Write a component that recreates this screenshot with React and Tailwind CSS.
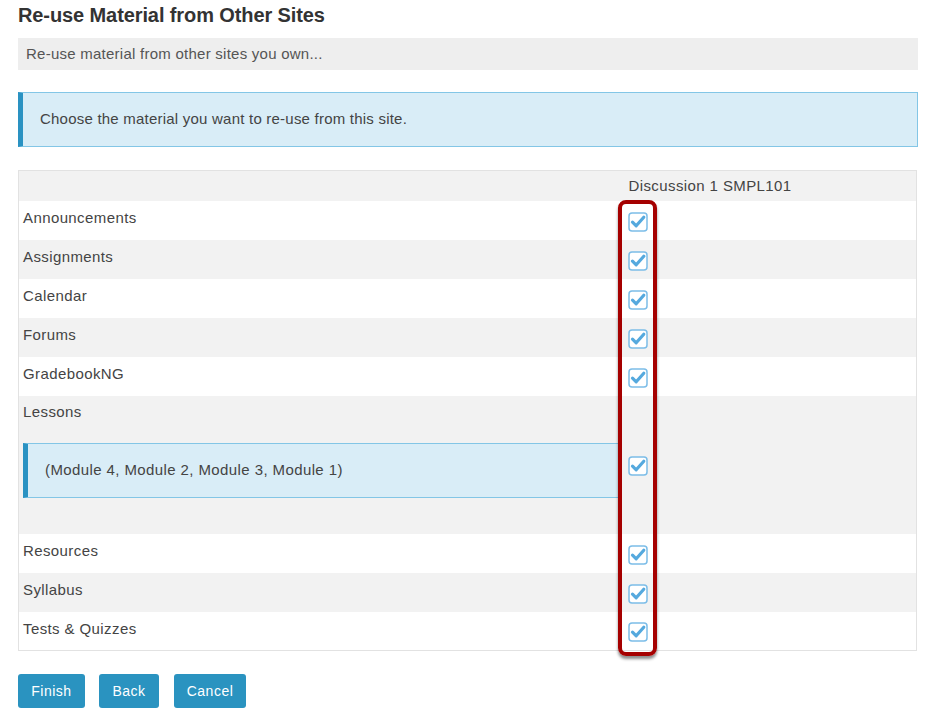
import React from 'react';

const Check = () => (
    <svg width="20" height="20" viewBox="0 0 20 20" className="block">
        <rect x="1" y="1" width="18" height="18" rx="3" fill="#ffffff" stroke="#7cbde8" strokeWidth="1.5" />
        <path d="M4.5 10.2 L8.2 13.8 L15.8 5.2" fill="none" stroke="#55a9de" strokeWidth="3.2" strokeLinecap="round" strokeLinejoin="round" />
    </svg>
);

const rows = [
    'Announcements',
    'Assignments',
    'Calendar',
    'Forums',
    'GradebookNG',
    'Lessons',
    'Resources',
    'Syllabus',
    'Tests & Quizzes',
];

export default function App() {
    return (
        <div className="bg-white min-h-[720px] px-[18px] pt-[3px] text-[#444]" style={{ fontFamily: '"Liberation Sans", Arial, sans-serif' }}>
            <div className="w-[900px]">
                <h1 className="text-[20px] font-bold text-[#333] leading-[24px] tracking-[-0.1px]">Re-use Material from Other Sites</h1>

                <div className="mt-[11px] bg-[#eeeeee] h-[32px] flex items-center px-[8px] text-[15px] tracking-[0.25px] text-[#555]">
                    Re-use material from other sites you own...
                </div>

                <div className="mt-[22px] bg-[#d9edf7] border border-[#83c6e6] border-l-[5px] border-l-[#2a92c2] h-[55px] flex items-center pl-[17px] text-[15px] tracking-[0.22px] text-[#444]">
                    Choose the material you want to re-use from this site.
                </div>

                <div className="relative mt-[23px]">
                    <table className="w-[899px] border border-[#e2e2e2] text-[15px] tracking-[0.4px] text-[#444]">
                        <thead>
                            <tr className="bg-[#f2f2f2] h-[30px]">
                                <th className="w-[605px]"></th>
                                <th className="text-left font-normal pl-[5px] align-middle">Discussion 1 SMPL101</th>
                            </tr>
                        </thead>
                        <tbody>
                            {rows.map((name, i) => {
                                const bg = i % 2 === 0 ? 'bg-white' : 'bg-[#f2f2f2]';
                                if (name === 'Lessons') {
                                    return (
                                        <tr key={name} className={`${bg} h-[138px]`}>
                                            <td className="align-top pl-[4px] pt-[6px] pb-[36px]">
                                                <div className="leading-[20px]">Lessons</div>
                                                <div className="mt-[21px] h-[55px] bg-[#d9edf7] border border-[#83c6e6] border-l-[5px] border-l-[#2a92c2] flex items-center pl-[17px] mr-[4px]">
                                                    (Module 4, Module 2, Module 3, Module 1)
                                                </div>
                                            </td>
                                            <td className="align-middle pl-[4px] pt-[2px]"><Check /></td>
                                        </tr>
                                    );
                                }
                                return (
                                    <tr key={name} className={`${bg} h-[39px]`}>
                                        <td className="pl-[4px] align-top pt-[7px] leading-[20px]">{name}</td>
                                        <td className="align-middle pl-[4px] pt-[3px]"><Check /></td>
                                    </tr>
                                );
                            })}
                        </tbody>
                    </table>
                    <div className="absolute left-[600px] top-[30px] w-[39px] h-[456px] border-[4px] border-[#a50000] rounded-[8px] shadow-[0_3px_3px_rgba(0,0,0,0.45)]"></div>
                </div>

                <div className="mt-[23px] flex gap-[14px]">
                    <button className="h-[34px] w-[67px] bg-[#2a93c0] rounded-[3px] text-white text-[14px] tracking-[0.5px]">Finish</button>
                    <button className="h-[34px] w-[60px] bg-[#2a93c0] rounded-[3px] text-white text-[14px] tracking-[0.5px]">Back</button>
                    <button className="h-[34px] w-[72px] bg-[#2a93c0] rounded-[3px] text-white text-[14px] tracking-[0.5px] ml-[1px]">Cancel</button>
                </div>
            </div>
        </div>
    );
}
